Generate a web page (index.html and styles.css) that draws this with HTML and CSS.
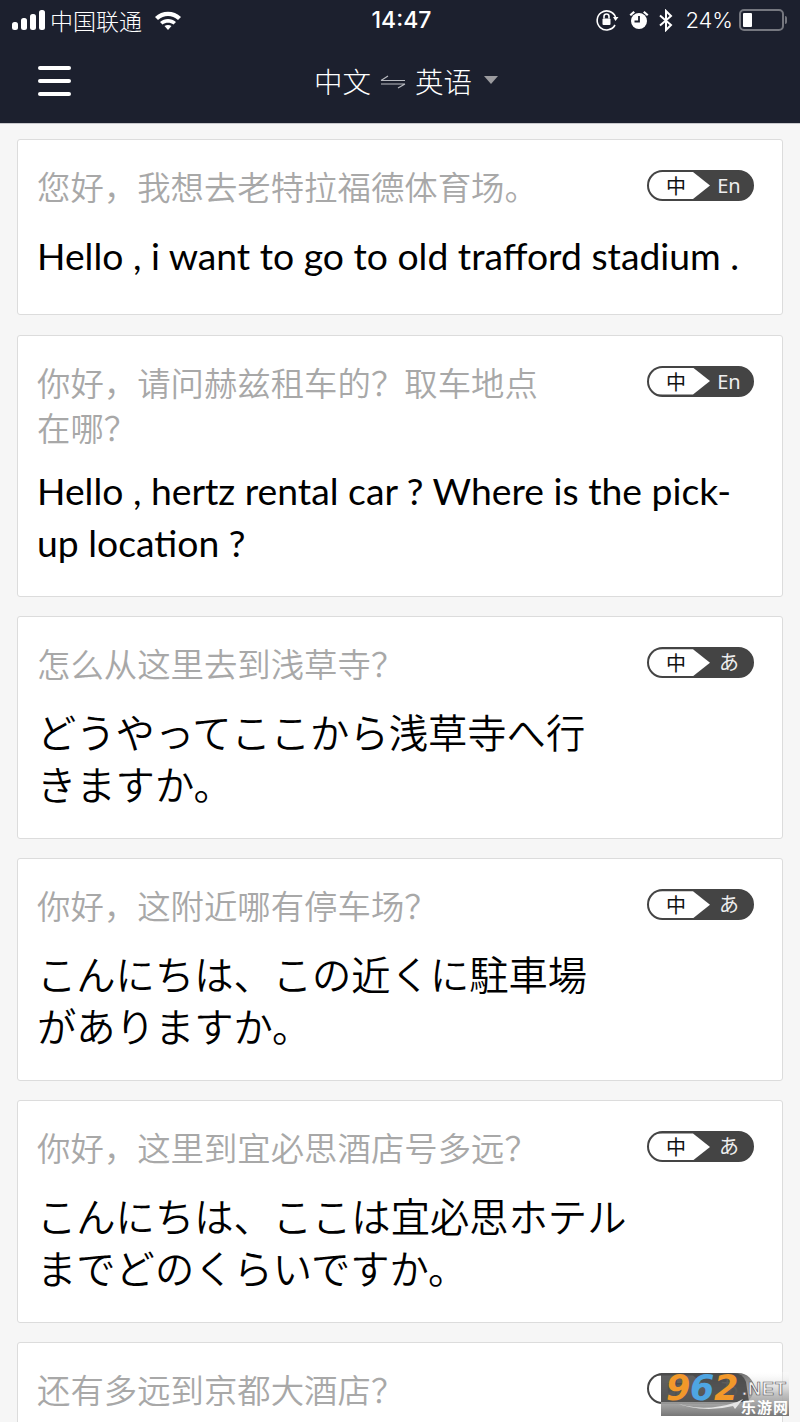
FILE: index.html
```html
<!DOCTYPE html>
<html lang="zh">

<head>
    <meta charset="UTF-8">
    <meta name="viewport" content="width=device-width, initial-scale=1.0">
    <title>Translator</title>
    <link rel="stylesheet" href="styles.css">
</head>

<body>
    <header class="top">
        <div class="status">
            <div class="status-left">
                <svg class="signal" width="33" height="20" viewBox="0 0 33 20">
                    <rect x="0" y="12" width="6" height="8" rx="2.500" fill="#fff" />
                    <rect x="9" y="8" width="6" height="12" rx="2.500" fill="#fff" />
                    <rect x="18" y="4" width="6" height="16" rx="2.500" fill="#fff" />
                    <rect x="27" y="0" width="6" height="20" rx="2.500" fill="#fff" />
                </svg>
                <span class="carrier">中国联通</span>
                <svg class="wifi" width="28" height="20" viewBox="0 0 28 20">
                    <path d="M1 7 C8 0 20 0 27 7 L24 10 C18 4.500 10 4.500 4 10 Z" fill="#fff" />
                    <path d="M6 12 C10.500 8 17.500 8 22 12 L19.500 14.500 C16.500 12 11.500 12 8.500 14.500 Z" fill="#fff" />
                    <path d="M10.500 16 C12.500 14.500 15.500 14.500 17.500 16 L14 20 Z" fill="#fff" />
                </svg>
            </div>
            <span class="clock">14:47</span>
            <div class="status-right">
                <svg width="24" height="24" viewBox="0 0 24 24" fill="none" stroke="#fff" stroke-width="1.6">
                    <path d="M20.500 9 A9.500 9.500 0 1 0 20 17" />
                    <path d="M18 9 L23.500 9 L20.500 13 Z" fill="#fff" stroke="none" />
                    <rect x="7.500" y="10.500" width="8" height="6.500" rx="1" fill="#fff" stroke="none" />
                    <path d="M9 10.500 V8.500 A2.500 2.500 0 0 1 14 8.500 V10.500" />
                </svg>
                <svg class="alarm" width="20" height="20" viewBox="0 0 20 20">
                    <circle cx="10" cy="11" r="8" fill="#fff" />
                    <path d="M10 6 V11.500 H5.500" fill="none" stroke="#1c202e" stroke-width="1.8" />
                    <path d="M0.500 4.500 L4.500 1 L6 2.500 L2 6 Z M19.500 4.500 L15.500 1 L14 2.500 L18 6 Z" fill="#fff" />
                </svg>
                <svg class="bt" width="14" height="23" viewBox="0 0 14 23" fill="none" stroke="#fff" stroke-width="2">
                    <path d="M1 6.500 L12 16 L7 21 V2 L12 7 L1 16.500" />
                </svg>
                <span class="battery-text">24%</span>
                <div class="battery">
                    <div class="battery-shell">
                        <div class="battery-level"></div>
                    </div>
                    <div class="battery-tip"></div>
                </div>
            </div>
        </div>
        <nav class="nav">
            <div class="menu">
                <span></span>
                <span></span>
                <span></span>
            </div>
            <div class="lang-pick">
                <span>中文</span>
                <svg class="swap" width="26" height="14" viewBox="0 0 26 14" fill="none" stroke="#b9bbc1" stroke-width="1.2">
                    <path d="M1 5.500 H25 M1 5.500 L8 1" />
                    <path d="M25 9 H1 M25 9 L18 13" />
                </svg>
                <span>英语</span>
                <div class="caret"></div>
            </div>
        </nav>
    </header>

    <main class="list">
        <section class="card card-short">
            <div class="card-head">
                <p class="src">您好，我想去老特拉福德体育场。</p>
                <div class="badge">
                    <span class="badge-from">中</span>
                    <span class="badge-to">En</span>
                </div>
            </div>
            <p class="result">Hello , i want to go to old trafford stadium .</p>
        </section>

        <section class="card">
            <div class="card-head">
                <p class="src">你好，请问赫兹租车的？取车地点<br>在哪？</p>
                <div class="badge">
                    <span class="badge-from">中</span>
                    <span class="badge-to">En</span>
                </div>
            </div>
            <p class="result">Hello , hertz rental car ? Where is the pick-<br>up location ?</p>
        </section>

        <section class="card">
            <div class="card-head">
                <p class="src">怎么从这里去到浅草寺？</p>
                <div class="badge">
                    <span class="badge-from">中</span>
                    <span class="badge-to">あ</span>
                </div>
            </div>
            <p class="result result-ja" lang="ja">どうやってここから浅草寺へ行<br>きますか。</p>
        </section>

        <section class="card">
            <div class="card-head">
                <p class="src">你好，这附近哪有停车场？</p>
                <div class="badge">
                    <span class="badge-from">中</span>
                    <span class="badge-to">あ</span>
                </div>
            </div>
            <p class="result result-ja" lang="ja">こんにちは、この近くに駐車場<br>がありますか。</p>
        </section>

        <section class="card">
            <div class="card-head">
                <p class="src">你好，这里到宜必思酒店号多远？</p>
                <div class="badge">
                    <span class="badge-from">中</span>
                    <span class="badge-to">あ</span>
                </div>
            </div>
            <p class="result result-ja" lang="ja">こんにちは、ここは宜必思ホテル<br>までどのくらいですか。</p>
        </section>

        <section class="card card-last">
            <div class="card-head">
                <p class="src">还有多远到京都大酒店？</p>
                <div class="badge">
                    <span class="badge-from">中</span>
                    <span class="badge-to">あ</span>
                </div>
            </div>
        </section>
    </main>

    <!-- site watermark over the corner -->
    <div class="watermark">
        <svg width="128" height="44" viewBox="0 0 128 44">
            <defs>
                <linearGradient id="wm-bg" x1="0" y1="0" x2="0" y2="1">
                    <stop offset="0" stop-color="#ffffff" stop-opacity="0.2" />
                    <stop offset="0.5" stop-color="#b8b8b8" stop-opacity="0.85" />
                    <stop offset="1" stop-color="#777777" />
                </linearGradient>
            </defs>
            <rect width="128" height="44" fill="url(#wm-bg)" />
            <path d="M0 1 H72 Q82 1 85 10 L88 30 H0 Z" fill="#444" opacity="0.85" />
            <path d="M10 29 Q40 42 76 30 L82 27 L74 37 L72 34 Q40 42 10 29 Z" fill="#e4e4e4" />
            <text x="5" y="28" class="wm-num wm-orange">9</text>
            <text x="29" y="28" class="wm-num wm-blue">6</text>
            <text x="53" y="28" class="wm-num wm-orange">2</text>
            <text x="81" y="23" class="wm-net">.NET</text>
            <text x="80" y="41" class="wm-cn">乐游网</text>
        </svg>
    </div>
</body>

</html>
```

FILE: styles.css
```css
/* General Reset */
* {
    margin: 0;
    padding: 0;
    box-sizing: border-box;
}

html,
body {
    height: 1422px;
    overflow: hidden;
}

body {
    position: relative;
    font-family: 'Noto Sans CJK SC', 'Noto Sans', sans-serif;
    background-color: #f6f6f6;
    color: #000;
}

.top {
    background-color: #1c202e;
    height: 124px;
    color: #fff;
    border-bottom: 1px solid #c8c8cc;
}

.status {
    height: 40px;
    padding: 0 12px;
    display: flex;
    align-items: center;
    justify-content: space-between;
}

.status-left,
.status-right {
    display: flex;
    align-items: center;
}

.status-left {
    width: 300px;
}

.status-right {
    width: 300px;
    justify-content: flex-end;
    padding-right: 1px;
}

.carrier {
    font-size: 23px;
    font-weight: 300;
    margin-left: 5px;
}

.wifi {
    margin-left: 12px;
}

.clock {
    font-family: 'Inter', sans-serif;
    font-size: 23px;
    font-weight: 500;
    margin-left: 3px;
}

.alarm {
    margin-left: 10px;
}

.bt {
    margin-left: 10px;
}

.battery-text {
    font-family: 'Inter', sans-serif;
    font-size: 22px;
    font-weight: 300;
    margin-left: 12px;
}

.battery {
    display: flex;
    align-items: center;
    margin-left: 6px;
}

.battery-shell {
    width: 45px;
    height: 22px;
    border: 2px solid #75777f;
    border-radius: 5px;
    padding: 2px;
}

.battery-level {
    width: 9px;
    height: 100%;
    background-color: #fff;
    border-radius: 1px;
}

.battery-tip {
    width: 2px;
    height: 8px;
    margin-left: 1px;
    background-color: #75777f;
    border-radius: 0 2px 2px 0;
}

.nav {
    height: 83px;
    display: flex;
    align-items: center;
    justify-content: center;
    position: relative;
}

.menu {
    position: absolute;
    left: 38px;
    top: 26px;
    width: 33px;
    display: flex;
    flex-direction: column;
    gap: 9px;
}

.menu span {
    height: 4px;
    background-color: #fff;
    border-radius: 2px;
}

.lang-pick {
    display: flex;
    align-items: center;
    font-size: 28.5px;
    font-weight: 300;
    margin-left: 12px;
    margin-bottom: 2px;
}

.swap {
    margin: 3px 9px 0;
}

.caret {
    width: 0;
    height: 0;
    margin-left: 12px;
    margin-bottom: 1px;
    border-left: 7px solid transparent;
    border-right: 7px solid transparent;
    border-top: 8px solid #9b9b9f;
}

.list {
    padding: 15px 17px 0;
    display: flex;
    flex-direction: column;
    gap: 19.6px;
}

.card {
    background-color: #fff;
    border: 1px solid #dcdcdc;
    border-radius: 3px;
    padding: 23px 20px 27px 19px;
    flex-shrink: 0;
}

.card-short {
    min-height: 176px;
}

.card-last {
    min-height: 223px;
}

.card-head {
    display: flex;
    justify-content: space-between;
    align-items: flex-start;
    min-height: 51px;
}

.src {
    width: 510px;
    font-size: 33.4px;
    line-height: 45px;
    font-weight: 350;
    color: #a8a8a8;
}

.badge {
    width: 107px;
    height: 31px;
    margin: 7px 8px 0 0;
    display: flex;
    background-color: #444;
    border: 2px solid #444;
    border-radius: 16px;
    overflow: hidden;
    font-size: 20px;
}

.badge-from {
    width: 61px;
    background-color: #fff;
    color: #111;
    text-align: center;
    line-height: 27px;
    padding-right: 7px;
    clip-path: polygon(0 0, 44px 0, 100% 50%, 44px 100%, 0 100%);
}

.badge-to {
    flex: 1;
    color: #eee;
    text-align: center;
    line-height: 27px;
    padding-right: 4px;
    font-family: 'Noto Sans', 'Noto Sans CJK JP', sans-serif;
}

.result {
    margin-top: 16px;
    font-family: 'Lato', 'Noto Sans CJK SC', sans-serif;
    font-size: 37.3px;
    line-height: 52px;
}

.result-ja {
    margin-top: 14px;
    margin-bottom: 1.5px;
    font-family: 'Noto Sans CJK JP', sans-serif;
    font-size: 39.3px;
    font-weight: 350;
}

.watermark {
    position: absolute;
    left: 661px;
    top: 1372px;
    width: 128px;
    height: 44px;
}

.wm-num {
    font-family: 'DejaVu Sans', sans-serif;
    font-size: 35px;
    font-weight: 700;
    font-style: italic;
}

.wm-orange {
    fill: #f2982a;
}

.wm-blue {
    fill: #4ea5e2;
}

.wm-net {
    font-family: 'Liberation Sans', sans-serif;
    font-size: 18px;
    font-weight: 700;
    fill: #f2f2f2;
    stroke: #555;
    stroke-width: 0.6;
    letter-spacing: 1px;
}

.wm-cn {
    font-family: 'Noto Sans CJK SC', sans-serif;
    font-size: 15px;
    font-weight: 700;
    fill: #fff;
    letter-spacing: 1px;
}
```
